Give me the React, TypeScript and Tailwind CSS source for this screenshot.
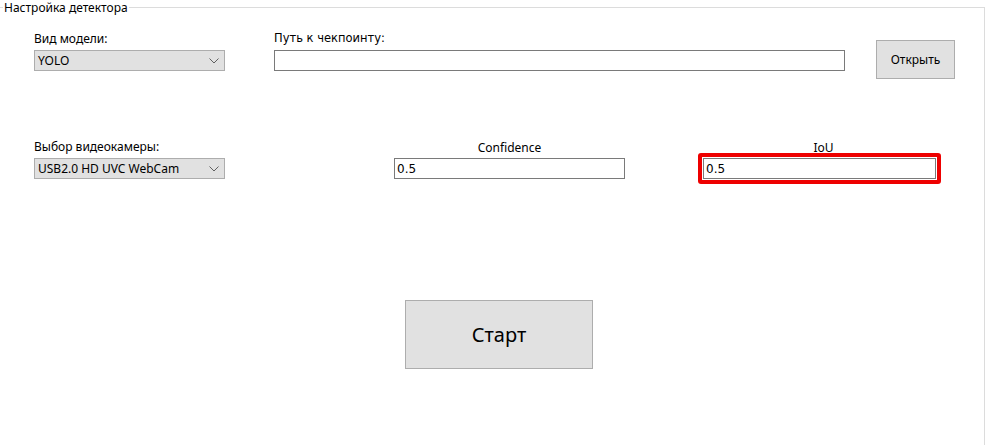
import React from 'react'

const SEGOE = "font-['Noto_Sans',sans-serif]"
const TAHOMA = "font-['DejaVu_Sans',sans-serif]"

function Chevron() {
  return (
    <svg width="10" height="6" viewBox="0 0 10 6" className="shrink-0">
      <path d="M0.5 0.5 L5 5 L9.5 0.5" fill="none" stroke="#606060" strokeWidth="1" />
    </svg>
  )
}

function Combo({ value }: { value: string }) {
  return (
    <div className="flex h-[21px] w-[191px] items-center justify-between border border-[#adadad] bg-[#e1e1e1] pl-[3px] pr-[5px]">
      <span className={`${SEGOE} text-[12px] leading-none text-black`}>{value}</span>
      <Chevron />
    </div>
  )
}

function Field({ value, width }: { value?: string; width: string }) {
  return (
    <div className={`flex h-[21px] ${width} items-center border border-[#7a7a7a] bg-white pl-[2px]`}>
      <span className={`${TAHOMA} text-[12px] leading-none text-black`}>{value}</span>
    </div>
  )
}

export default function App() {
  return (
    <div className="relative h-[445px] w-[988px] overflow-hidden bg-white pt-[7px]">
      <div className="h-full w-[985px] border-r border-t border-[#dcdcdc]">
        {/* top row */}
        <div className="flex items-start pl-[34px] pt-[23px]">
          <div className="flex w-[191px] flex-col">
            <span className={`${SEGOE} h-[19px] text-[12px] leading-[15px] text-black`}>Вид модели:</span>
            <Combo value="YOLO" />
          </div>
          <div className="ml-[49px] flex flex-col">
            <span className={`${TAHOMA} h-[19px] text-[11.5px] leading-[15px] text-black`}>Путь к чекпоинту:</span>
            <Field width="w-[571px]" />
          </div>
          <button
            className={`${SEGOE} ml-[31px] mt-[9px] h-[39px] w-[79px] border border-[#adadad] bg-[#e1e1e1] text-[12px] text-black`}
          >
            Открыть
          </button>
        </div>

        {/* second row */}
        <div className="mt-[60px] flex items-start pl-[34px]">
          <div className="flex w-[191px] flex-col">
            <span className={`${SEGOE} h-[19px] text-[12px] leading-[16px] text-black`}>Выбор видеокамеры:</span>
            <Combo value="USB2.0 HD UVC WebCam" />
          </div>
          <div className="ml-[169px] flex w-[231px] flex-col items-center">
            <span className={`${SEGOE} h-[19px] text-[12px] leading-[17px] text-black`}>Confidence</span>
            <Field value="0.5" width="w-[231px]" />
          </div>
          <div className="ml-[73px] flex flex-col items-center">
            <span className={`${SEGOE} relative z-10 h-[16px] translate-x-[4px] text-[12px] leading-[18px] text-black`}>IoU</span>
            <div className="-mt-[2px] rounded-[3px] border-[4px] border-[#ee0000] p-px">
              <Field value="0.5" width="w-[233px]" />
            </div>
          </div>
        </div>

        {/* start */}
        <div className="mt-[116px] flex pl-[405px]">
          <button
            className={`${SEGOE} h-[69px] w-[188px] border border-[#adadad] bg-[#e1e1e1] text-[20px] text-black`}
          >
            Старт
          </button>
        </div>
      </div>

      <span className={`${SEGOE} absolute left-[3px] top-0 bg-white px-px text-[12px] leading-[15px] text-black`}>
        Настройка детектора
      </span>
    </div>
  )
}
